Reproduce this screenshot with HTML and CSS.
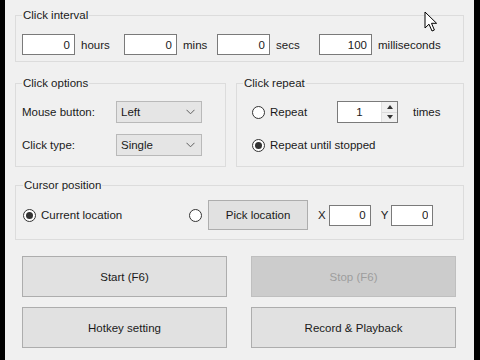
FILE: index.html
```html
<!DOCTYPE html>
<html>
<head>
	<meta charset="utf-8">
	<title>Auto Clicker</title>
	<link rel="stylesheet" href="styles.css">
</head>
<body>
	<div class="window">
		<fieldset class="group">
			<legend>Click interval</legend>
			<div class="interval">
				<input class="num" type="text" value="0"><span class="unit u-hours">hours</span>
				<input class="num" type="text" value="0"><span class="unit u-mins">mins</span>
				<input class="num" type="text" value="0"><span class="unit u-secs">secs</span>
				<input class="num" type="text" value="100"><span class="unit">milliseconds</span>
			</div>
		</fieldset>

		<div class="pair">
			<fieldset class="group options">
				<legend>Click options</legend>
				<div class="row">
					<span class="label">Mouse button:</span>
					<div class="combo"><span>Left</span><svg width="9" height="6" viewBox="0 0 9 6"><path d="M0.5 0.8 L4.5 4.8 L8.5 0.8" fill="none" stroke="#606060" stroke-width="1"/></svg></div>
				</div>
				<div class="row">
					<span class="label">Click type:</span>
					<div class="combo"><span>Single</span><svg width="9" height="6" viewBox="0 0 9 6"><path d="M0.5 0.8 L4.5 4.8 L8.5 0.8" fill="none" stroke="#606060" stroke-width="1"/></svg></div>
				</div>
			</fieldset>
			<fieldset class="group repeat">
				<legend>Click repeat</legend>
				<div class="row">
					<span class="radio"></span><span class="radio-text r-repeat">Repeat</span>
					<div class="spin">
						<input class="spin-val" type="text" value="1">
						<div class="spin-btns">
							<span class="arrow up"></span>
							<span class="arrow down"></span>
						</div>
					</div>
					<span class="times">times</span>
				</div>
				<div class="row">
					<span class="radio checked"></span><span class="radio-text">Repeat until stopped</span>
				</div>
			</fieldset>
		</div>

		<fieldset class="group cursor">
			<legend>Cursor position</legend>
			<div class="row cursor-row">
				<span class="radio checked"></span><span class="radio-text r-current">Current location</span>
				<span class="radio"></span>
				<button class="btn pick">Pick location</button>
				<span class="axis">X</span><input class="num small" type="text" value="0">
				<span class="axis">Y</span><input class="num small" type="text" value="0">
			</div>
		</fieldset>

		<div class="actions">
			<button class="btn big">Start (F6)</button>
			<button class="btn big disabled">Stop (F6)</button>
			<button class="btn big">Hotkey setting</button>
			<button class="btn big">Record &amp; Playback</button>
		</div>

		<svg class="pointer" width="14" height="22" viewBox="0 0 14 22">
			<path d="M1 1 L1 17 L5 13.2 L8 20 L10.4 19 L7.5 12.3 L12.6 12.3 Z" fill="#fff" stroke="#000" stroke-width="1" stroke-linejoin="round"/>
		</svg>
	</div>
</body>
</html>
```

FILE: styles.css
```css
html, body{
	margin: 0;
	padding: 0;
	background-color: #000;
	height: 100%;
	overflow: hidden;
}
.window{
	position: relative;
	box-sizing: border-box;
	margin-left: 5px;
	width: 469px;
	height: 360px;
	padding: 8px 10px 0 10px;
	background-color: #f0f0f0;
	font-family: "Liberation Sans", Arial, sans-serif;
	font-size: 11.5px;
	color: #1a1a1a;
}
.group{
	margin: 0;
	padding: 12px 6px 6px 6px;
	border: 1px solid #dcdcdc;
	min-width: 0;
}
.group legend{
	padding: 0 1px;
	line-height: 14px;
}
.interval{
	display: flex;
	align-items: center;
}
.num{
	box-sizing: border-box;
	width: 53px;
	height: 21px;
	margin: 0;
	padding: 0 4px 0 0;
	border: 1px solid #7a7a7a;
	background: #fff;
	text-align: right;
	font-family: inherit;
	font-size: 11.5px;
	color: #1a1a1a;
	outline: none;
}
.unit{
	margin-left: 6px;
}
.u-hours{ width: 43px; }
.u-mins{ width: 34px; }
.u-secs{ width: 43px; }

.pair{
	display: flex;
	gap: 10px;
	margin-top: 14px;
}
.options{
	width: 211px;
	box-sizing: border-box;
	padding: 11px 6px 10px 6px;
}
.repeat{
	flex: 1;
	padding: 11px 6px 10px 6px;
}
.repeat .radio{
	margin-left: 9px;
}
.row{
	display: flex;
	align-items: center;
	height: 22px;
}
.row + .row{
	margin-top: 11px;
}
.label{
	width: 94px;
}
.combo{
	box-sizing: border-box;
	display: flex;
	align-items: center;
	justify-content: space-between;
	width: 86px;
	height: 22px;
	padding: 0 6px 0 4px;
	border: 1px solid #b9b9b9;
	background: #e5e5e5;
}
.combo svg{
	display: block;
}
.radio{
	box-sizing: border-box;
	position: relative;
	width: 13px;
	height: 13px;
	border: 1px solid #333;
	border-radius: 50%;
	background: #fff;
	flex: none;
}
.radio.checked::after{
	content: "";
	position: absolute;
	left: 2px;
	top: 2px;
	width: 7px;
	height: 7px;
	border-radius: 50%;
	background: #333;
}
.radio-text{
	margin-left: 5px;
}
.r-repeat{
	width: 67px;
}
.spin{
	box-sizing: border-box;
	display: flex;
	width: 61px;
	height: 22px;
	border: 1px solid #7a7a7a;
	background: #fff;
}
.spin-val{
	box-sizing: border-box;
	width: 43px;
	height: 20px;
	margin: 0;
	padding: 0;
	border: none;
	text-align: center;
	font-family: inherit;
	font-size: 11.5px;
	color: #1a1a1a;
	outline: none;
}
.spin-btns{
	flex: 1;
	display: flex;
	flex-direction: column;
	border-left: 1px solid #e0e0e0;
	background: #f0f0f0;
}
.arrow{
	flex: 1;
	display: flex;
	align-items: center;
	justify-content: center;
}
.arrow.up{
	border-bottom: 1px solid #dadada;
}
.arrow::before{
	content: "";
	border-left: 3px solid transparent;
	border-right: 3px solid transparent;
}
.arrow.up::before{
	border-bottom: 4px solid #333;
}
.arrow.down::before{
	border-top: 4px solid #333;
}
.times{
	margin-left: 15px;
}

.cursor{
	margin-top: 11px;
	padding: 8px 6px 9px 7px;
}
.cursor-row{
	height: 30px;
}
.r-current{
	width: 148px;
}
.btn{
	box-sizing: border-box;
	margin: 0;
	border: 1px solid #adadad;
	background: #e1e1e1;
	font-family: inherit;
	font-size: 11.5px;
	color: #1a1a1a;
	padding: 0;
}
.pick{
	width: 100px;
	height: 30px;
	margin-left: 6px;
}
.axis{
	margin: 0 3px 0 10px;
}
.num.small{
	width: 42px;
	height: 21px;
}

.actions{
	display: grid;
	grid-template-columns: 205px 205px;
	column-gap: 24px;
	row-gap: 10px;
	margin-top: 16px;
	padding-left: 7px;
}
.btn.big{
	height: 41px;
}
.btn.disabled{
	background: #cccccc;
	border-color: #bfbfbf;
	color: #9d9d9d;
}
.pointer{
	position: absolute;
	left: 419px;
	top: 11px;
}
```
